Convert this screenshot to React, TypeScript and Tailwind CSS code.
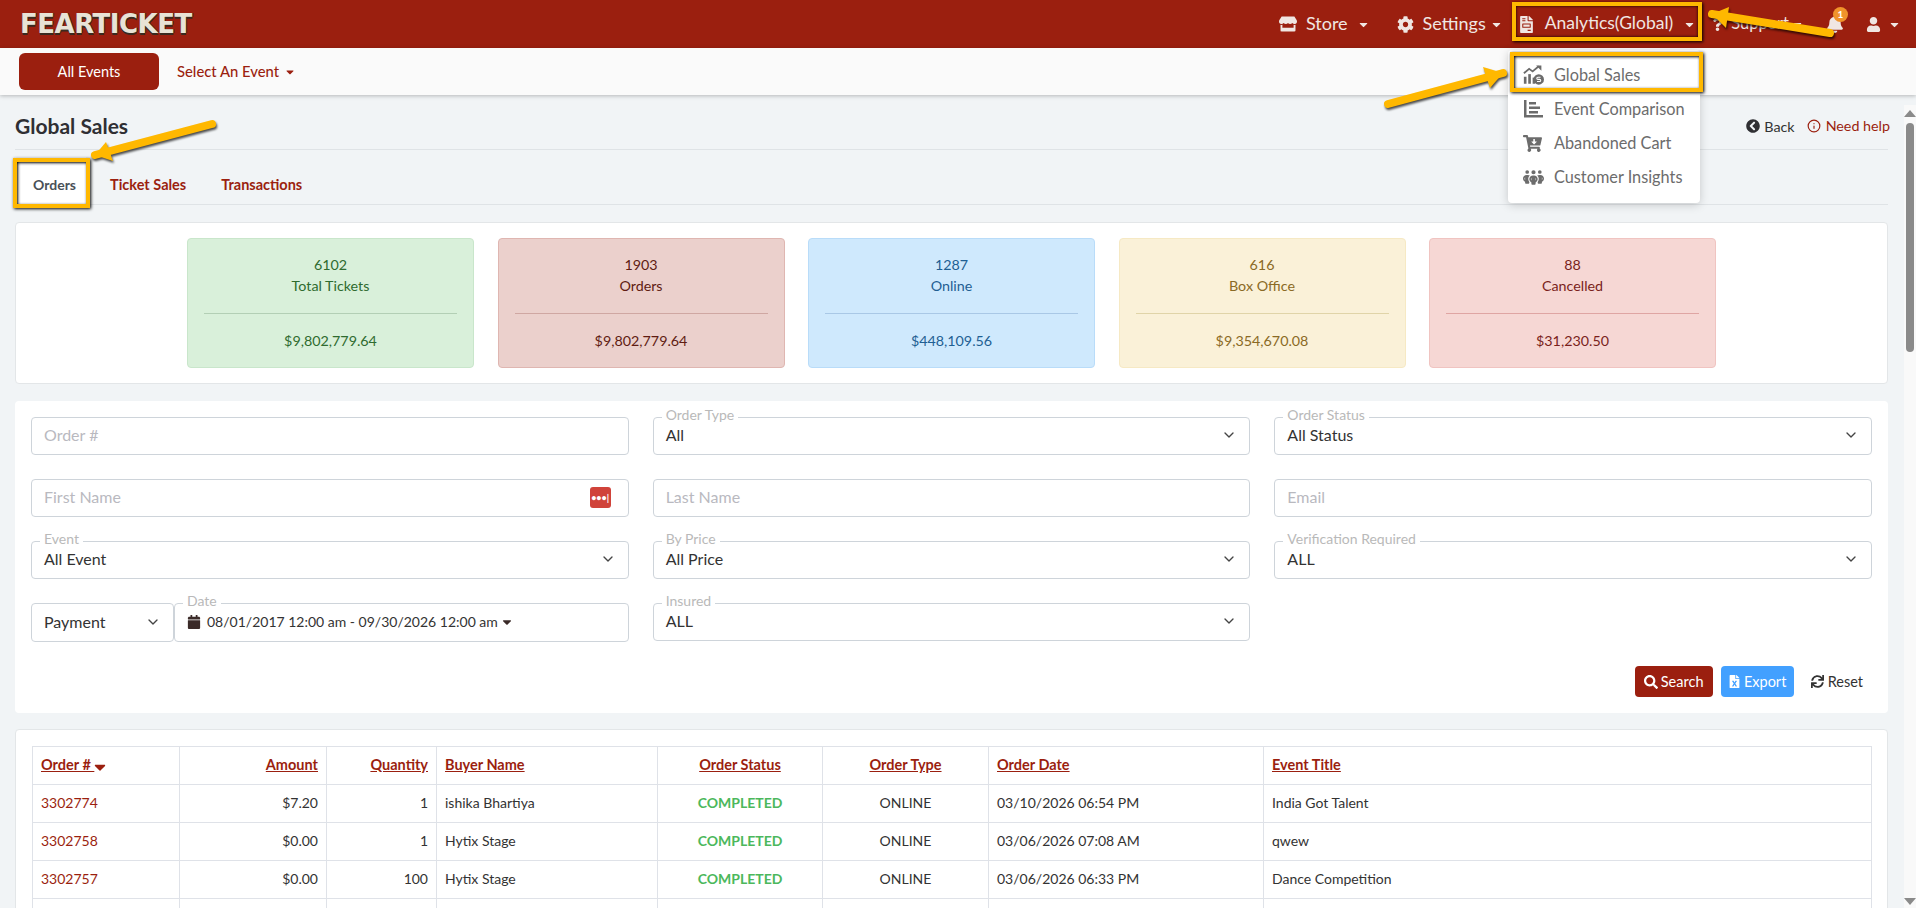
import { Fragment, type ReactNode } from "react";
import { ChevronDown, Info } from "lucide-react";
import {
  FaBell,
  FaCalendar,
  FaCaretDown,
  FaCartArrowDown,
  FaChevronCircleLeft,
  FaCog,
  FaFileExcel,
  FaFileInvoice,
  FaQuestion,
  FaSearch,
  FaStore,
  FaSync,
  FaUser,
} from "react-icons/fa";
import { FaPeopleGroup } from "react-icons/fa6";

const stats = [
  { value: "6102", label: "Total Tickets", amount: "$9,802,779.64", box: "bg-[#d9f0da] border-[#c9e6cb]", text: "text-[#2f6b2f]", hr: "border-[#b3cfb5]" },
  { value: "1903", label: "Orders", amount: "$9,802,779.64", box: "bg-[#ebd0cc] border-[#dfb6b1]", text: "text-[#5f1c12]", hr: "border-[#cfa7a2]" },
  { value: "1287", label: "Online", amount: "$448,109.56", box: "bg-[#cfe9fd] border-[#b9dcf9]", text: "text-[#1f5f93]", hr: "border-[#a9c8e6]" },
  { value: "616", label: "Box Office", amount: "$9,354,670.08", box: "bg-[#faf1d8] border-[#f6e9c4]", text: "text-[#8a6a25]", hr: "border-[#e0d4a8]" },
  { value: "88", label: "Cancelled", amount: "$31,230.50", box: "bg-[#f6d7d4] border-[#f0c4c1]", text: "text-[#7a1f1c]", hr: "border-[#dfa5a3]" },
];

const orders = [
  { id: "3302774", amount: "$7.20", qty: "1", buyer: "ishika Bhartiya", date: "03/10/2026 06:54 PM", title: "India Got Talent" },
  { id: "3302758", amount: "$0.00", qty: "1", buyer: "Hytix Stage", date: "03/06/2026 07:08 AM", title: "qwew" },
  { id: "3302757", amount: "$0.00", qty: "100", buyer: "Hytix Stage", date: "03/06/2026 06:33 PM", title: "Dance Competition" },
];

function GlobalSalesIcon() {
  return (
    <svg width="21" height="20" viewBox="0 0 24 22" fill="#6b6b6b">
      <rect x="1" y="13" width="3" height="8" />
      <rect x="6" y="10" width="3" height="11" />
      <rect x="11" y="14" width="3" height="7" />
      <path d="M1 9l6-5 4 3 7-6" fill="none" stroke="#6b6b6b" strokeWidth="2" />
      <path d="M15 0h6v6z" />
      <circle cx="18" cy="16" r="6" />
      <path d="M20 13.5h-3a1 1 0 0 0 0 2.500h2a1 1 0 0 1 0 2.500h-3" fill="none" stroke="#fff" strokeWidth="1.200" />
    </svg>
  );
}

function ComparisonIcon() {
  return (
    <svg width="20" height="18" viewBox="0 0 20 18" fill="#6b6b6b">
      <path d="M1 0h2.500v15H20v2.500H1z" />
      <rect x="6" y="2" width="7" height="2.500" />
      <rect x="6" y="6.500" width="11" height="2.500" />
      <rect x="6" y="11" width="9" height="2.500" />
    </svg>
  );
}

function Field({ label, children, className = "" }: { label?: string; children: ReactNode; className?: string }) {
  return (
    <div className={`relative flex h-[38px] items-center rounded border border-[#ced4da] bg-white pb-[2px] pl-[12px] pr-[12px] text-[16px] text-[#333] ${className}`}>
      {label && (
        <span className="absolute left-[8px] top-[-11px] bg-white px-[4px] text-[14px] leading-[16px] text-[#b9b9b9]">
          {label}
        </span>
      )}
      {children}
    </div>
  );
}

function SelectField({ label, value, className }: { label?: string; value: string; className?: string }) {
  return (
    <Field label={label} className={className}>
      <span className="flex-1">{value}</span>
      <ChevronDown size={16} strokeWidth={2} className="text-[#444]" />
    </Field>
  );
}

function TextField({ placeholder, children, className }: { placeholder: string; children?: ReactNode; className?: string }) {
  return (
    <Field className={className}>
      <input placeholder={placeholder} className="w-full flex-1 outline-none placeholder:text-[#b9b9bf]" />
      {children}
    </Field>
  );
}

function NavItem({ icon, label, className = "" }: { icon?: ReactNode; label: string; className?: string }) {
  return (
    <div className={`flex items-center text-[#f0e6e2] ${className}`}>
      {icon}
      <span className="pb-[2px]">{label}</span>
    </div>
  );
}

function Arrow({ tail, tip, wingA, wingB }: { tail: string; tip: string; wingA: string; wingB: string }) {
  const [tipX, tipY] = tip.split(",");
  return (
    <g>
      <path d={`M${tail} L${tipX} ${tipY}`} stroke="#ffb800" strokeWidth="8" strokeLinecap="round" fill="none" />
      <polygon points={`${tip} ${wingA} ${wingB}`} fill="#ffb800" />
    </g>
  );
}

export default function App() {
  return (
    <div className="relative h-screen overflow-hidden bg-[#f1f4f6] [font-family:Lato,'Noto_Sans',sans-serif] text-[14px] text-[#333]">
      {/* top bar */}
      <header className="flex h-[48px] items-center justify-between bg-[#9b1f0f] pl-[20px] pr-[15px]">
        <span className="[font-family:'DejaVu_Sans',sans-serif] text-[26px] font-bold leading-none tracking-[-0.5px] text-[#e8e3d6] [text-shadow:0_2px_0_#3a2a20,1px_0_0_#3a2a20]">
          FEARTICKET
        </span>
        <nav className="flex items-center">
          <NavItem icon={<FaStore size={18} className="mr-[9px]" />} label="Store" className="text-[18px]" />
          <FaCaretDown size={13} className="ml-[9px] text-[#f0e6e2]" />
          <NavItem icon={<FaCog size={17} className="mr-[9px]" />} label="Settings" className="ml-[27px] text-[18px]" />
          <FaCaretDown size={13} className="ml-[4px] text-[#f0e6e2]" />
          <NavItem icon={<FaFileInvoice size={17} className="mr-[10px]" />} label="Analytics(Global)" className="ml-[15px] text-[17.500px]" />
          <FaCaretDown size={13} className="ml-[10px] text-[#f0e6e2]" />
          <NavItem icon={<FaQuestion size={13} className="mr-[7px]" />} label="Support" className="ml-[15px] text-[16.500px]" />
          <FaCaretDown size={13} className="ml-[2px] text-[#f0e6e2]" />
          <div className="relative ml-[22px]">
            <FaBell size={18} className="text-[#f0e6e2]" />
            <span className="absolute left-[7px] top-[-8px] flex h-[15px] w-[15px] items-center justify-center rounded-full bg-[#f0932b] text-[10px] font-bold text-white">
              1
            </span>
          </div>
          <FaUser size={15} className="ml-[22px] text-[#f0e6e2]" />
          <FaCaretDown size={13} className="ml-[7px] text-[#f0e6e2]" />
        </nav>
      </header>

      {/* event bar */}
      <div className="relative flex h-[47px] items-center bg-[#fafafa] pl-[19px] shadow-[0_1px_4px_rgba(0,0,0,0.25)]">
        <button className="flex h-[37px] w-[140px] items-center justify-center rounded-md bg-[#9b1f0f] text-[14.500px] text-white">
          All Events
        </button>
        <span className="ml-[18px] text-[14.800px] font-medium text-[#9b1f0f]">Select An Event</span>
        <FaCaretDown size={12} className="ml-[5px] text-[#9b1f0f]" />
      </div>

      <main className="pl-[15px] pr-[28px]">
        {/* title */}
        <div className="flex h-[55px] items-center justify-between border-b border-[#dfe3e6] pt-[8px]">
          <h1 className="text-[21px] font-bold text-[#2f2f33]">Global Sales</h1>
          <div className="-mr-[2px] flex items-center text-[14.300px]">
            <FaChevronCircleLeft size={14} className="text-[#2f2f33]" />
            <span className="ml-[4px] mt-[2px]">Back</span>
            <Info size={14} className="ml-[12px] text-[#9b1f0f]" />
            <span className="ml-[5px] text-[#9b1f0f]">Need help</span>
          </div>
        </div>

        {/* tabs */}
        <div className="flex h-[55px] items-end border-b border-[#dfe3e6] text-[14.500px] font-bold">
          <div className="flex h-[47px] w-[71px] items-center bg-white pl-[18px] pt-[8px] text-[14px] text-[#495057]">Orders</div>
          <div className="flex h-[47px] items-center pl-[24px] pt-[8px] text-[#9b1f0f]">Ticket Sales</div>
          <div className="flex h-[47px] items-center pl-[35px] pt-[8px] text-[#9b1f0f]">Transactions</div>
        </div>

        {/* totals */}
        <section className="mt-[17px] flex h-[162px] items-center justify-center gap-[23.500px] rounded border border-[#e3e6e8] bg-white text-[14.300px]">
          {stats.map((s) => (
            <div key={s.label} className={`flex h-[130px] w-[287px] flex-col rounded border px-[16px] text-center ${s.box} ${s.text}`}>
              <div className="mt-[16px] leading-[20px]">{s.value}</div>
              <div className="mt-[1px] leading-[20px]">{s.label}</div>
              <hr className={`mt-[17px] ${s.hr}`} />
              <div className="mt-[17px] leading-[20px]">{s.amount}</div>
            </div>
          ))}
        </section>

        {/* filters */}
        <section className="mt-[17px] h-[312px] rounded bg-white p-[16px]">
          <div className="grid grid-cols-3 gap-x-[24px] gap-y-[24px]">
            <TextField placeholder="Order #" />
            <SelectField label="Order Type" value="All" />
            <SelectField label="Order Status" value="All Status" />
            <TextField placeholder="First Name" className="!pr-[17px]">
              <span className="flex h-[21px] w-[21px] items-center justify-center rounded-[3px] bg-[#d0433a] text-[9px] font-bold leading-none text-white">
                •••|
              </span>
            </TextField>
            <TextField placeholder="Last Name" />
            <TextField placeholder="Email" />
            <SelectField label="Event" value="All Event" />
            <SelectField label="By Price" value="All Price" />
            <SelectField label="Verification Required" value="ALL" />
            <div className="flex">
              <SelectField value="Payment" className="!h-[39px] w-[143px] shrink-0" />
              <Field label="Date" className="!h-[39px] flex-1">
                <FaCalendar size={14} className="text-[#3a2a28]" />
                <span className="ml-[6px] text-[14px]">08/01/2017 12:00 am - 09/30/2026 12:00 am</span>
                <FaCaretDown size={14} className="ml-[2px] text-[#3a2a28]" />
              </Field>
            </div>
            <SelectField label="Insured" value="ALL" />
          </div>
          <div className="mt-[24px] flex items-center justify-end pr-[9px] text-[14.500px]">
            <button className="flex h-[31px] w-[78px] items-center justify-center gap-[3px] rounded bg-[#9b1f0f] text-white">
              <FaSearch size={14} />
              Search
            </button>
            <button className="ml-[8px] flex h-[31px] w-[73px] items-center justify-center gap-[3px] rounded bg-[#42a0ff] text-white">
              <FaFileExcel size={13} />
              Export
            </button>
            <span className="ml-[17px] flex items-center gap-[4px]">
              <FaSync size={13} />
              Reset
            </span>
          </div>
        </section>

        {/* orders table */}
        <section className="mt-[16px] rounded border border-[#e3e6e8] bg-white p-[16px] pr-[17px]">
          <table className="w-full table-fixed border-collapse">
            <colgroup>
              {[147, 147, 110, 221, 165, 166, 275, 608].map((w, i) => (
                <col key={i} style={{ width: w }} />
              ))}
            </colgroup>
            <thead>
              <tr className="h-[38px] text-[14.500px] font-bold text-[#9b1f0f] underline [&>th]:border [&>th]:border-[#dfe2e8] [&>th]:px-[8px] [&>th]:pb-[2px]">
                <th className="text-left">
                  Order # <FaCaretDown size={18} className="-ml-[3px] inline align-[-6px]" />
                </th>
                <th className="text-right">Amount</th>
                <th className="text-right">Quantity</th>
                <th className="text-left">Buyer Name</th>
                <th className="text-center">Order Status</th>
                <th className="text-center">Order Type</th>
                <th className="text-left">Order Date</th>
                <th className="text-left">Event Title</th>
              </tr>
            </thead>
            <tbody>
              {orders.map((o) => (
                <Fragment key={o.id}>
                  <tr className="h-[38px] [&>td]:border [&>td]:border-[#dfe2e8] [&>td]:px-[8px] [&>td]:pb-[2px]">
                    <td className="text-[#9b1f0f]">{o.id}</td>
                    <td className="text-right">{o.amount}</td>
                    <td className="text-right">{o.qty}</td>
                    <td>{o.buyer}</td>
                    <td className="text-center font-bold text-[#4cb85c]">COMPLETED</td>
                    <td className="text-center">ONLINE</td>
                    <td>{o.date}</td>
                    <td>{o.title}</td>
                  </tr>
                </Fragment>
              ))}
              <tr className="h-[38px] [&>td]:border [&>td]:border-[#dfe2e8]">
                {Array.from({ length: 8 }).map((_, i) => (
                  <td key={i} />
                ))}
              </tr>
            </tbody>
          </table>
        </section>
      </main>

      {/* scrollbar */}
      <div className="absolute bottom-0 right-0 top-[105px] flex w-[12px] flex-col items-center bg-[#f9f9f9]">
        <span className="mt-[5px] h-0 w-0 border-x-[6px] border-b-[7px] border-x-transparent border-b-[#8a8a8a]" />
        <span className="mt-[6px] h-[229px] w-[8px] rounded-full bg-[#8a8a8a]" />
        <span className="mb-[3px] mt-auto h-0 w-0 border-x-[6px] border-t-[7px] border-x-transparent border-t-[#8a8a8a]" />
      </div>

      {/* analytics dropdown */}
      <div className="absolute left-[1508px] top-[50px] h-[153px] w-[192px] rounded bg-white pt-[8px] text-[16.300px] text-[#6c6c6c] shadow-[0_2px_10px_rgba(0,0,0,0.18)]">
        {[
          { label: "Global Sales", icon: <GlobalSalesIcon /> },
          { label: "Event Comparison", icon: <ComparisonIcon /> },
          { label: "Abandoned Cart", icon: <FaCartArrowDown size={19} /> },
          { label: "Customer Insights", icon: <FaPeopleGroup size={21} /> },
        ].map((item) => (
          <div key={item.label} className="flex h-[34px] items-center pl-[15px]">
            <span className="flex w-[31px] justify-start">{item.icon}</span>
            {item.label}
          </div>
        ))}
      </div>

      {/* tutorial highlights */}
      <div className="absolute left-[1512px] top-[2px] h-[39px] w-[190px] border-[4px] border-[#ffb800] shadow-[inset_0_0_3px_#000,1px_1px_3px_#000]" />
      <div className="absolute left-[1510px] top-[52px] h-[40px] w-[193px] border-[4px] border-[#ffb800] shadow-[inset_1px_1px_3px_#000,1px_1px_3px_#000]" />
      <div className="absolute left-[13px] top-[158px] h-[50px] w-[77px] border-[4px] border-[#ffb800] shadow-[inset_1px_1px_3px_#000,1px_1px_3px_#000]" />

      {/* tutorial arrows */}
      <svg className="pointer-events-none absolute left-0 top-0 h-[908px] w-[1916px] [filter:drop-shadow(1px_2px_1px_rgba(0,0,0,0.7))]" viewBox="0 0 1916 908">
        <Arrow tail="212 124" tip="95,155" wingA="106,142" wingB="113,161" />
        <Arrow tail="1830 33" tip="1712,14" wingA="1729,7" wingB="1726,28" />
        <Arrow tail="1388 104" tip="1503,73" wingA="1483,67" wingB="1490,88" />
      </svg>
    </div>
  );
}
